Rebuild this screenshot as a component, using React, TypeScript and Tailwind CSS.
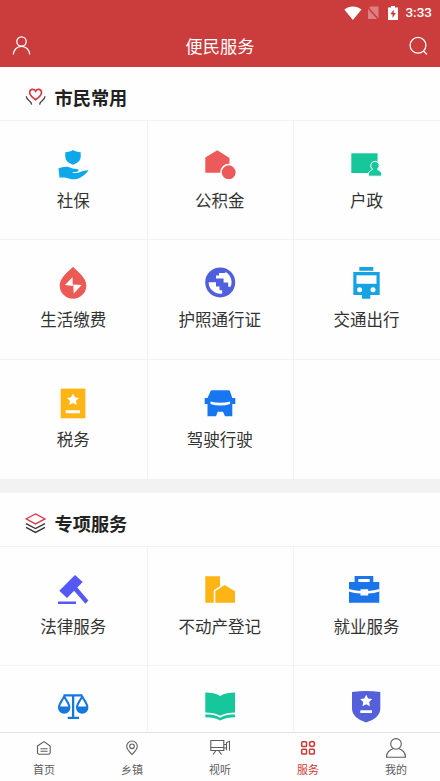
import React, { useState } from 'react';

type Service = { id: string; label?: string };

const COMMON: Service[] = [
  { id: 'social', label: '社保' },
  { id: 'fund', label: '公积金' },
  { id: 'household', label: '户政' },
  { id: 'utility', label: '生活缴费' },
  { id: 'passport', label: '护照通行证' },
  { id: 'transit', label: '交通出行' },
  { id: 'tax', label: '税务' },
  { id: 'driving', label: '驾驶行驶' },
  { id: 'empty' },
];

const SPECIAL: Service[] = [
  { id: 'law', label: '法律服务' },
  { id: 'estate', label: '不动产登记' },
  { id: 'job', label: '就业服务' },
  { id: 'justice' },
  { id: 'education' },
  { id: 'police' },
];

const TABS = [
  { id: 'home', label: '首页' },
  { id: 'town', label: '乡镇' },
  { id: 'media', label: '视听' },
  { id: 'service', label: '服务' },
  { id: 'mine', label: '我的' },
];

const getServiceIcon = (id: string) => {
  switch (id) {
    case 'social':
      return (
        <g fill="#0ea8ea">
          <path d="M16 1c2.3 1.4 4.8 2 7.7 2.3v4.5c0 3.8-3 6.3-7.7 8-4.7-1.7-7.7-4.2-7.7-8V3.300C11.200 3 13.700 2.400 16 1z" />
          <path d="M1.500 19.500c3-1.400 6.500-2.300 10-1.600 2 .4 3.500 1.600 5.500 1.800 1.800.2 3.600.1 4.300.9.700.9.100 1.800-1 2.100-1.700.4-3.800.3-5.500.5 2.500 1.300 5.800 1 8.500-.2 2.400-1 5.200-1.800 8.200-1.700-2 3.200-5 5.800-8.500 7.500-3.500 1.800-7 1.900-10.500.9-3-.9-6.500-1.500-10-.900z" />
        </g>
      );
    case 'fund':
      return (
        <g fill="#ec5a5a">
          <path d="M1.300 8.500 13.300 1.200 25.500 9v14.700H1.300z" />
          <circle cx="24.700" cy="23.300" r="7.700" stroke="#fff" strokeWidth="1.500" />
        </g>
      );
    case 'household':
      return (
        <g fill="#17c79c">
          <path d="M1.300 4.300h26.300V24H1.300z" />
          <path
            d="M25 12.300a4.300 4.300 0 0 1 2.500 7.800c.2 1.400 4.200 1.900 4.200 4.400v2.700H18.300v-2.700c0-2.500 4-3 4.200-4.400a4.300 4.300 0 0 1 2.500-7.800z"
            stroke="#fff"
            strokeWidth="1"
          />
        </g>
      );
    case 'utility':
      return (
        <>
          <path d="M16-1.200c3 3.600 13.300 10.500 13.300 18.600a13.300 13.300 0 0 1-26.600 0C2.700 9.300 13 2.400 16-1.200z" fill="#ec5a55" />
          <path d="M15.500 9.200 8 17.100l7.800.9zM16.200 16.400l8.500.7-8 8.300z" fill="#fff" />
        </>
      );
    case 'passport':
      return (
        <>
          <circle cx="16.200" cy="14.400" r="15" fill="#505fdc" />
          <path d="M4.700 14.200H12v4.300h3.500v3.700h2.700v3.300c-.7.100-1.300.2-2 .2A11.400 11.400 0 0 1 4.700 14.200z" fill="#fff" />
          <path d="M12 10.400V7.500h3V5h5.500l1.500-.8c3.400 2 5.600 5.800 5.600 10 0 1.600-.3 3.200-1 4.600h-2.400v-4.200h-4.600v-4.200z" fill="#fff" />
        </>
      );
    case 'transit':
      return (
        <>
          <path d="M9.300-1h14v3.700h-14zM3.300 4h26.400v23h-9.400v3.700H12V27H3.300z" fill="#16a3e4" />
          <path d="M6.500 7.300h20v8.500h-20z" fill="#fff" />
          <circle cx="9.600" cy="21.700" r="2.500" fill="#fff" />
          <circle cx="23" cy="21.700" r="2.500" fill="#fff" />
        </>
      );
    case 'tax':
      return (
        <>
          <path d="M3.700.6h24.700v29.700H3.700z" fill="#fdb515" />
          <path d="m16 5.500 1.900 3.800 4.100.6-3 2.900.7 4.200-3.700-2-3.700 2 .7-4.200-3-2.900 4.100-.6zM8.700 22.200H23v3H8.700z" fill="#fff" />
        </>
      );
    case 'driving':
      return (
        <>
          <path d="M8.200 2.300h16.200c1 0 1.500.5 1.800 1.500L28.300 10h3v6h-3v12.300H21l-2-4.600h-5.300L12 28.300H3.500V16H.7v-6h2.800l2.800-6.200c.3-1 .9-1.500 1.900-1.500z" fill="#1677f0" />
          <path d="M6.500 13.500q9.800 2.600 19.600 0v2.400q-9.800 3.400-19.600 0z" fill="#fff" />
        </>
      );
    case 'law':
      return (
        <g fill="#5558f5">
          <path d="m18 0 7.700 7L10 23l-7.700-7.300z" />
          <path d="m16 14.500 3.200-3.200 12.200 14.200-3 3.200zM1 26.400h18V29H1z" />
        </g>
      );
    case 'estate':
      return (
        <g fill="#fdb515">
          <path d="M1.300 1.300H16v10l-6.200 4v12.400H1.300z" />
          <path d="M11.300 16.300 20.500 10l10.500 6.300v11.400H11.300z" />
        </g>
      );
    case 'job':
      return (
        <>
          <path d="M4.600 1h18.700v6h6v20.700H-1V7h5.600zM8.300 4v3h11.400V4z" fillRule="evenodd" fill="#1a74ea" />
          <path d="M-1.200 14q5.700 1.700 11.700 2v-1.700h7.700V16q6-.3 11.300-2v2.400q-5.300 1.800-11.300 2.100v2h-7.700v-2q-6-.3-11.700-2.100z" fill="#fff" />
        </>
      );
    case 'justice':
      return (
        <g fill="none" stroke="#1677de" strokeWidth="2">
          <path d="M6.500 1.400h19M16.100 1v22.500M10.700 23.800H22" strokeWidth="2.300" />
          <path d="M7.200 2c-.9 3.500-5.200 7-5.200 11.500a5.200 5.200 0 0 0 10.400 0C12.400 9 8.100 5.500 7.200 2zM25.200 2c-.9 3.500-5.200 7-5.200 11.500a5.200 5.200 0 0 0 10.400 0C30.400 9 26.100 5.500 25.200 2z" />
          <path d="M2 13h10.400a5.200 5.200 0 0 1-10.400 0zM20 13h10.400a5.200 5.200 0 0 1-10.400 0z" fill="#1677de" strokeWidth="1" />
        </g>
      );
    case 'education':
      return (
        <g fill="#17c79c">
          <path d="M1.300-1.500C7-1.500 12-1 16.200 2 20.500-1 25.500-1.500 31-1.500v19.900c-5.500 0-10.500.6-14.800 3.300-4.200-2.700-9.200-3.300-14.900-3.300z" />
          <path d="M1.300 20.500c5.700 0 10.700.5 14.900 3.200 4.300-2.700 9.300-3.200 14.800-3.200v2.700c-5.500 0-10.500.6-14.800 3.300-4.200-2.700-9.200-3.300-14.900-3.300z" />
        </g>
      );
    case 'police':
      return (
        <>
          <path d="M2-2c9.500-1.400 19-1.400 28.300 0v16.300c0 7.500-6.300 11.500-14.200 14.200C8.300 25.800 2 21.800 2 14.300z" fill="#545fdc" />
          <path d="m16.200.7 1.900 3.900 4.100.5-3 2.900.7 4.200-3.700-2-3.700 2 .7-4.200-3-2.900 4.100-.5zM10.300 16.300H22v2.800H10.300z" fill="#fff" />
        </>
      );
    default:
      return null;
  }
};

const getTabIcon = (id: string) => {
  switch (id) {
    case 'home':
      return <path d="M3.500 8 10 3.600 16.200 8v6.500c0 1-.6 1.700-1.700 1.700H5.200c-1.100 0-1.700-.7-1.700-1.700zM6.500 10.800h7M6.500 13.300h7" />;
    case 'town':
      return (
        <>
          <path d="M10 16.500C7.500 14 4.700 11.500 4.700 8.300a5.300 5.300 0 0 1 10.600 0c0 3.200-2.800 5.700-5.300 8.200z" />
          <circle cx="10" cy="8.300" r="2.300" />
        </>
      );
    case 'media':
      return <path d="M.8 2.500h13v10H.8zM.8 9.500h13M13.800 6.500h2.700M13.800 10h2.700M16.500 12.300V4.500l3-1.200v9.500M6 12.500l-3 4M8.500 12.500l3 4" />;
    case 'service':
      return (
        <g strokeWidth="1.500">
          <rect x="3.700" y="3.700" width="4.800" height="4.800" rx=".8" />
          <circle cx="14" cy="6.100" r="2.500" />
          <rect x="3.700" y="11.300" width="4.800" height="4.800" rx=".8" />
          <rect x="11.500" y="11.300" width="4.800" height="4.800" rx=".8" />
        </g>
      );
    default:
      return (
        <>
          <circle cx="10" cy="5.900" r="5.300" />
          <path d="M7 10.800C3 12 .6 15 .5 19.300h19C19.400 15 17 12 13 10.800" />
        </>
      );
  }
};

function SectionTitle({ title, children }: { title: string; children: React.ReactNode }) {
  return (
    <div className="flex h-[54px] items-center border-b border-[#f3f3f3] pt-[7px] pl-[25px]">
      <svg className="h-[22px] w-[22px] shrink-0" viewBox="0 0 22 22" fill="none" strokeWidth="1.300">
        {children}
      </svg>
      <h2 className="ml-[7.500px] text-[18.200px] leading-none font-bold text-[#222]">{title}</h2>
    </div>
  );
}

function ServiceGrid({ items }: { items: Service[] }) {
  return (
    <div className="grid grid-cols-3">
      {items.map((item, i) => (
        <div
          key={item.id}
          className={`flex h-[119.33px] flex-col items-center border-[#f3f3f3] pt-7 ${i % 3 > 0 ? 'border-l pr-[1.500px]' : ''} ${
            i < items.length - 3 ? 'border-b' : ''
          }`}
        >
          <svg className="h-8 w-8 shrink-0 overflow-visible" viewBox="0 0 32 32">
            {getServiceIcon(item.id)}
          </svg>
          {item.label && <span className="mt-[7px] text-[16.500px] leading-6 text-[#333]">{item.label}</span>}
        </div>
      ))}
    </div>
  );
}

export default function App() {
  const [activeTab, setActiveTab] = useState('service');

  return (
    <div className="flex h-[781px] w-[440px] flex-col overflow-hidden bg-[#fefefe] font-['Noto_Sans_CJK_SC',sans-serif]">
      <header className="h-[67px] shrink-0 bg-[#cb3c3c] text-white">
        {/* Status bar */}
        <div className="flex h-[25px] items-center justify-end pr-2">
          <svg className="mr-[-1px] h-4 w-[46px]" viewBox="0 0 46 16" fill="#fff">
            <path d="M1.300 4.500C6.500.6 13.300.6 18.500 4.500L9.900 15z" />
            <path d="m25 3 3-1.500h7.500V14H25z" opacity=".35" />
            <path d="m24 1.500 12 13.500" stroke="#cb3c3c" strokeWidth="1.600" />
          </svg>
          <svg className="h-4 w-[10px]" viewBox="0 0 10 16">
            <path d="M3 1h4v1.500h3V15H0V2.500h3z" fill="#fff" />
            <path d="M5.800 4.500 2.300 9.200h2.200v3.700l3.400-4.800H5.700z" fill="#cb3c3c" />
          </svg>
          <span className="mt-px ml-[7px] font-['Roboto',sans-serif] text-[13.500px] leading-none font-medium">3:33</span>
        </div>

        {/* Title bar */}
        <div className="flex h-[42px] items-center justify-between pr-3 pl-3">
          <svg className="h-5 w-5" viewBox="0 0 20 20" fill="none" stroke="#fff" strokeWidth="1.300">
            <circle cx="9.500" cy="5.500" r="4.700" />
            <path d="M1.300 18.500c.3-4.500 3.500-8.200 8.200-8.200s7.900 3.700 8.200 8.200" />
          </svg>
          <h1 className="text-[17.200px] leading-none">便民服务</h1>
          <svg className="h-5 w-5" viewBox="0 0 20 20" fill="none" stroke="#fff" strokeWidth="1.300">
            <circle cx="10" cy="9.300" r="7.900" />
            <path d="m15.500 15 3.500 3.500" />
          </svg>
        </div>
      </header>

      <main className="min-h-0 flex-1 overflow-hidden">
        <SectionTitle title="市民常用">
          <path
            d="M10.600 13.800C7.500 11.500 4.700 9.400 4.700 6.400c0-3.300 4.300-4.300 5.900-1.200 1.600-3.100 5.900-2.100 5.900 1.200 0 3-2.800 5.100-5.900 7.400z"
            stroke="#dc3a3e"
            strokeWidth="1.700"
          />
          <path d="M1.300 10.300c0 2.500 1.500 3.500 3.200 4.700 1.300 1 2 2 2.200 3.700M20 10.300c0 2.500-1.500 3.500-3.200 4.700-1.300 1-2 2-2.200 3.700" stroke="#444" />
        </SectionTitle>
        <ServiceGrid items={COMMON} />

        <div className="h-[14px] bg-[#f2f2f2]" />

        <SectionTitle title="专项服务">
          <path d="m10.500 1.900 9.500 5-9.500 5-9.500-5z" stroke="#dc3a4a" />
          <path d="m1 11.600 9.500 5 9.500-5M1 15.400l9.500 5 9.500-5" stroke="#333" />
        </SectionTitle>
        <ServiceGrid items={SPECIAL} />
      </main>

      <nav className="flex h-[49px] shrink-0 border-t border-[#e2e2e2] bg-[#fefefe]">
        {TABS.map((tab) => (
          <button
            key={tab.id}
            onClick={() => setActiveTab(tab.id)}
            className={`flex flex-1 flex-col items-center pt-[5px] ${activeTab === tab.id ? 'text-[#cc3a35]' : 'text-[#5c5c5c]'}`}
          >
            <svg className="h-5 w-5 shrink-0" viewBox="0 0 20 20" fill="none" stroke="currentColor" strokeWidth="1.100">
              {getTabIcon(tab.id)}
            </svg>
            <span className="mt-[3px] text-[11px] leading-4">{tab.label}</span>
          </button>
        ))}
      </nav>
    </div>
  );
}
